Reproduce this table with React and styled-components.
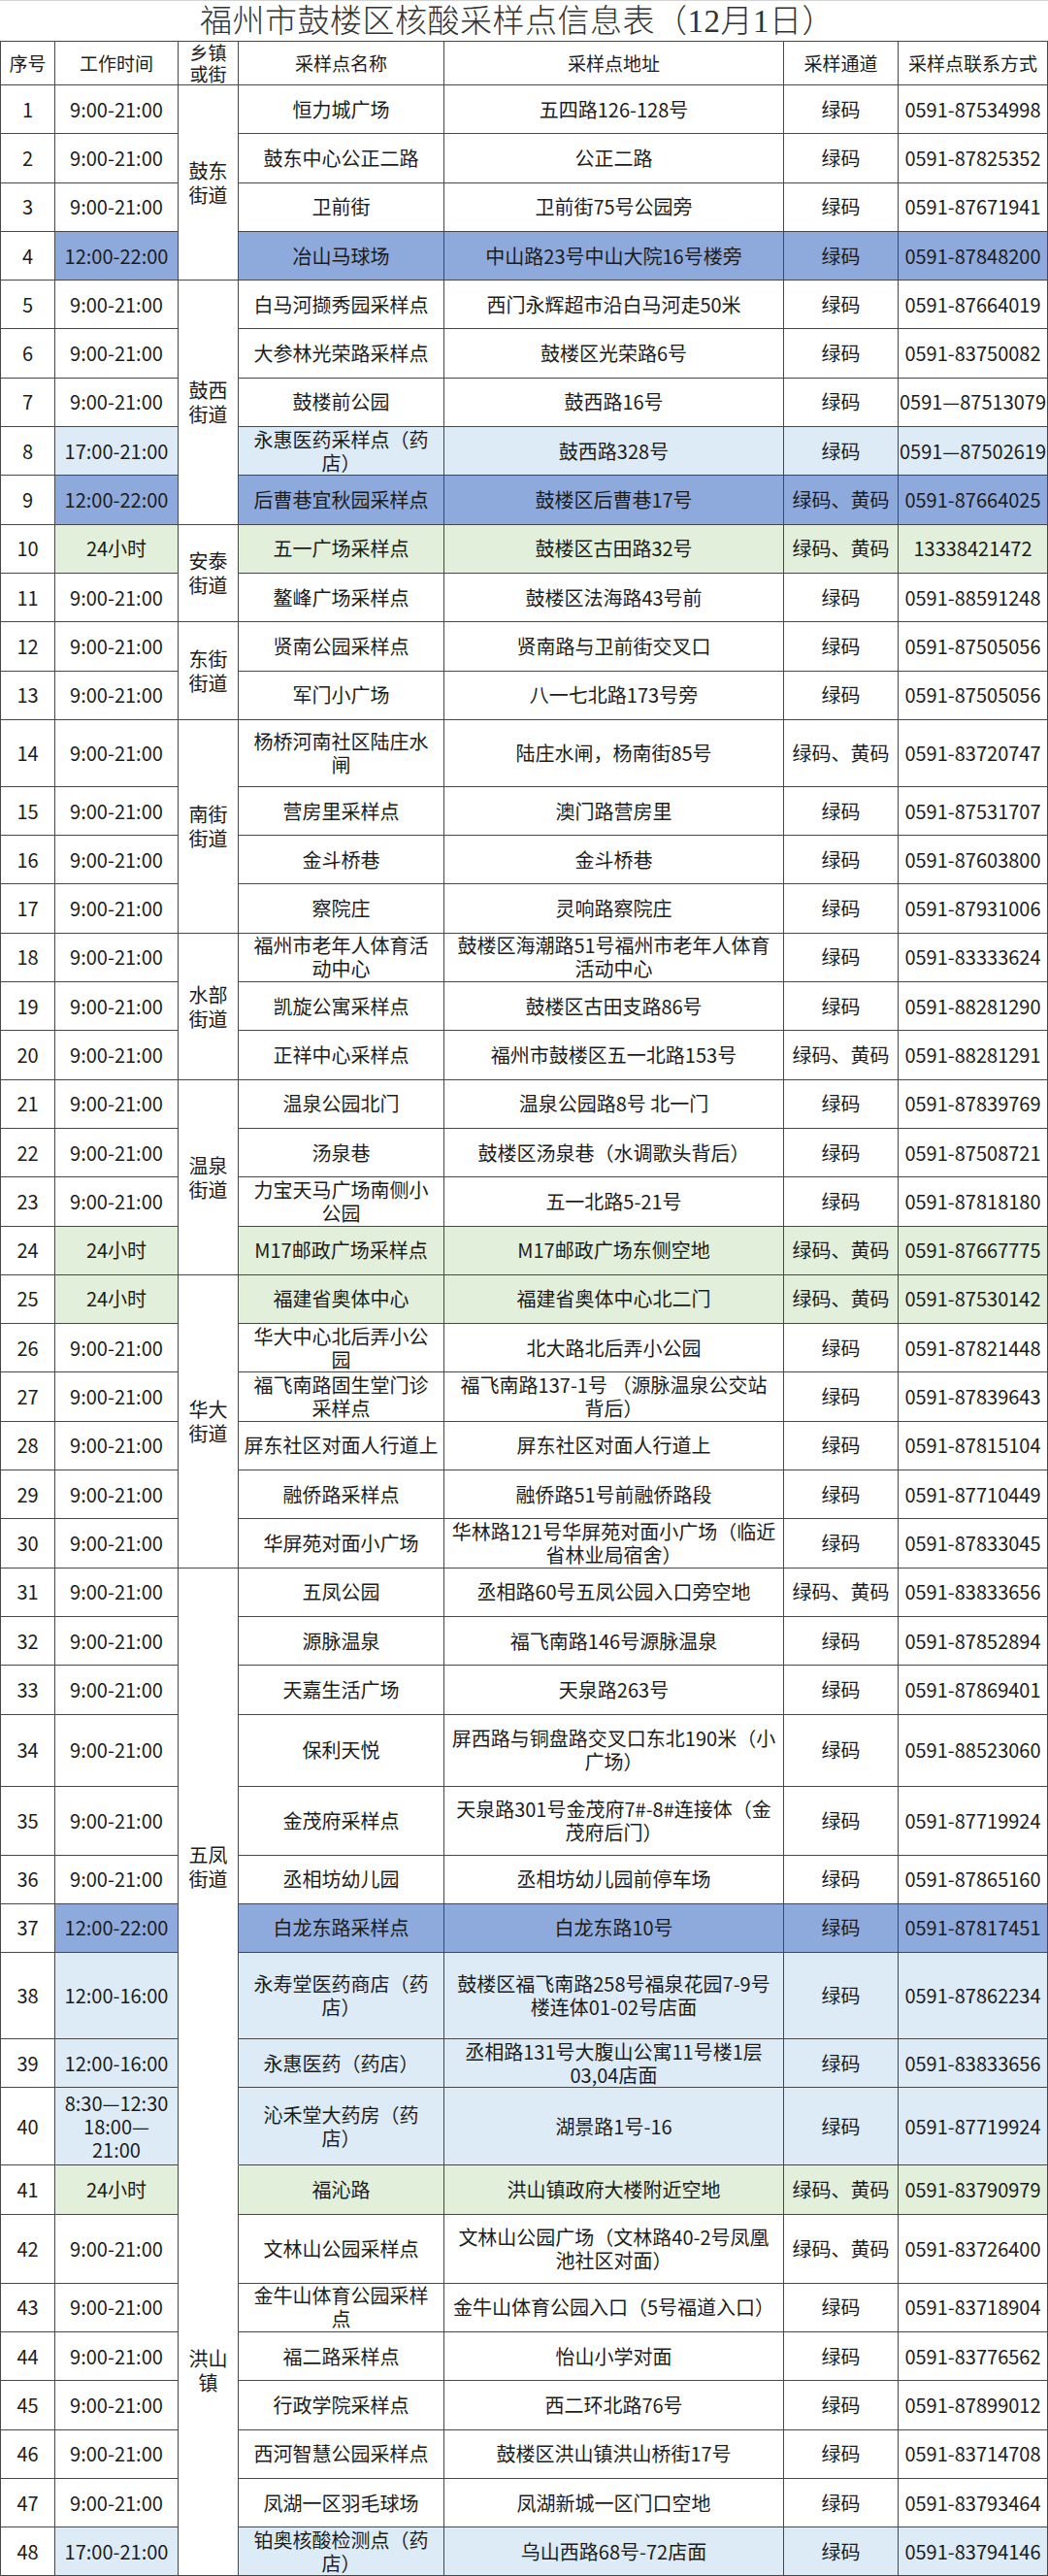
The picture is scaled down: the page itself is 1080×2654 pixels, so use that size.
import React from 'react';
import styled, { createGlobalStyle } from 'styled-components';

const GlobalStyle = createGlobalStyle`
  html, body {
    margin: 0;
    padding: 0;
    background: #ffffff;
  }
  body {
    font-family: "Noto Sans CJK SC", "Noto Sans", sans-serif;
    color: #1c1c1c;
  }
`;

const COLORS = {
  B: '#8ea9db',
  L: '#ddebf7',
  G: '#e2efda',
};

const LINE = '#474747';

const Sheet = styled.div`
  width: 1080px;
  display: grid;
  grid-template-columns: 57px 127px 62px 212px 350px 118px 154px;
  grid-template-rows: ${(p) => p.$rows};
  box-sizing: border-box;
`;

const Title = styled.div`
  grid-column: 1 / -1;
  display: flex;
  align-items: center;
  justify-content: center;
  border-top: 1px solid #d4d4d4;
  border-bottom: 1px solid ${LINE};
  box-sizing: border-box;
  font-family: "Liberation Serif", "Noto Sans CJK SC", serif;
  font-size: 33px;
  line-height: 40px;
  font-weight: 300;
  color: #333333;
  letter-spacing: 0.5px;
  padding-right: 14px;
`;

const Cell = styled.div`
  display: flex;
  align-items: center;
  justify-content: center;
  text-align: center;
  white-space: pre;
  box-sizing: border-box;
  border-right: 1px solid ${LINE};
  border-bottom: 1px solid ${(p) => (p.$noBottom ? 'transparent' : LINE)};
  border-left: ${(p) => (p.$first ? `1px solid ${LINE}` : 'none')};
  background: ${(p) => (p.$bg ? COLORS[p.$bg] : '#ffffff')};
  font-size: ${(p) => (p.$head ? '19px' : '20px')};
  line-height: 24px;
`;

const GroupCell = styled(Cell)`
  grid-row: span ${(p) => p.$span};
  background: #ffffff;
  line-height: 25px;
`;

const HeadCell = styled(Cell)`
  line-height: 22px;
`;

const groups = [
  { name: '鼓东\n街道', span: 4 },
  { name: '鼓西\n街道', span: 5 },
  { name: '安泰\n街道', span: 2 },
  { name: '东街\n街道', span: 2 },
  { name: '南街\n街道', span: 4 },
  { name: '水部\n街道', span: 3 },
  { name: '温泉\n街道', span: 4 },
  { name: '华大\n街道', span: 6 },
  { name: '五凤\n街道', span: 10, open: true },
  { name: '洪山\n镇', span: 8 },
];

const T = '9:00-21:00';
const G = '绿码';
const GY = '绿码、黄码';

// [工作时间, 名称, 地址, 通道, 电话, 底色, 行高]
const rows = [
  [T, '恒力城广场', '五四路126-128号', G, '0591-87534998'],
  [T, '鼓东中心公正二路', '公正二路', G, '0591-87825352'],
  [T, '卫前街', '卫前街75号公园旁', G, '0591-87671941'],
  ['12:00-22:00', '冶山马球场', '中山路23号中山大院16号楼旁', G, '0591-87848200', 'B'],
  [T, '白马河撷秀园采样点', '西门永辉超市沿白马河走50米', G, '0591-87664019'],
  [T, '大参林光荣路采样点', '鼓楼区光荣路6号', G, '0591-83750082'],
  [T, '鼓楼前公园', '鼓西路16号', G, '0591—87513079'],
  ['17:00-21:00', '永惠医药采样点（药\n店）', '鼓西路328号', G, '0591—87502619', 'L'],
  ['12:00-22:00', '后曹巷宜秋园采样点', '鼓楼区后曹巷17号', GY, '0591-87664025', 'B'],
  ['24小时', '五一广场采样点', '鼓楼区古田路32号', GY, '13338421472', 'G'],
  [T, '鳌峰广场采样点', '鼓楼区法海路43号前', G, '0591-88591248'],
  [T, '贤南公园采样点', '贤南路与卫前街交叉口', G, '0591-87505056'],
  [T, '军门小广场', '八一七北路173号旁', G, '0591-87505056'],
  [T, '杨桥河南社区陆庄水\n闸', '陆庄水闸，杨南街85号', GY, '0591-83720747', null, 69],
  [T, '营房里采样点', '澳门路营房里', G, '0591-87531707'],
  [T, '金斗桥巷', '金斗桥巷', G, '0591-87603800'],
  [T, '察院庄', '灵响路察院庄', G, '0591-87931006'],
  [T, '福州市老年人体育活\n动中心', '鼓楼区海潮路51号福州市老年人体育\n活动中心', G, '0591-83333624'],
  [T, '凯旋公寓采样点', '鼓楼区古田支路86号', G, '0591-88281290'],
  [T, '正祥中心采样点', '福州市鼓楼区五一北路153号', GY, '0591-88281291'],
  [T, '温泉公园北门', '温泉公园路8号 北一门', G, '0591-87839769'],
  [T, '汤泉巷', '鼓楼区汤泉巷（水调歌头背后）', G, '0591-87508721'],
  [T, '力宝天马广场南侧小\n公园', '五一北路5-21号', G, '0591-87818180'],
  ['24小时', 'M17邮政广场采样点', 'M17邮政广场东侧空地', GY, '0591-87667775', 'G'],
  ['24小时', '福建省奥体中心', '福建省奥体中心北二门', GY, '0591-87530142', 'G'],
  [T, '华大中心北后弄小公\n园', '北大路北后弄小公园', G, '0591-87821448'],
  [T, '福飞南路固生堂门诊\n采样点', '福飞南路137-1号 （源脉温泉公交站\n背后）', G, '0591-87839643'],
  [T, '屏东社区对面人行道上', '屏东社区对面人行道上', G, '0591-87815104'],
  [T, '融侨路采样点', '融侨路51号前融侨路段', G, '0591-87710449'],
  [T, '华屏苑对面小广场', '华林路121号华屏苑对面小广场（临近\n省林业局宿舍）', G, '0591-87833045'],
  [T, '五凤公园', '丞相路60号五凤公园入口旁空地', GY, '0591-83833656'],
  [T, '源脉温泉', '福飞南路146号源脉温泉', G, '0591-87852894'],
  [T, '天嘉生活广场', '天泉路263号', G, '0591-87869401'],
  [T, '保利天悦', '屏西路与铜盘路交叉口东北190米（小\n广场）', G, '0591-88523060', null, 74],
  [T, '金茂府采样点', '天泉路301号金茂府7#-8#连接体（金\n茂府后门）', G, '0591-87719924', null, 71],
  [T, '丞相坊幼儿园', '丞相坊幼儿园前停车场', G, '0591-87865160'],
  ['12:00-22:00', '白龙东路采样点', '白龙东路10号', G, '0591-87817451', 'B'],
  ['12:00-16:00', '永寿堂医药商店（药\n店）', '鼓楼区福飞南路258号福泉花园7-9号\n楼连体01-02号店面', G, '0591-87862234', 'L', 89],
  ['12:00-16:00', '永惠医药（药店）', '丞相路131号大腹山公寓11号楼1层\n03,04店面', G, '0591-83833656', 'L'],
  ['8:30—12:30\n18:00—\n21:00', '沁禾堂大药房（药\n店）', '湖景路1号-16', G, '0591-87719924', 'L', 80],
  ['24小时', '福沁路', '洪山镇政府大楼附近空地', GY, '0591-83790979', 'G'],
  [T, '文林山公园采样点', '文林山公园广场（文林路40-2号凤凰\n池社区对面）', GY, '0591-83726400', null, 71],
  [T, '金牛山体育公园采样\n点', '金牛山体育公园入口（5号福道入口）', G, '0591-83718904'],
  [T, '福二路采样点', '怡山小学对面', G, '0591-83776562'],
  [T, '行政学院采样点', '西二环北路76号', G, '0591-87899012'],
  [T, '西河智慧公园采样点', '鼓楼区洪山镇洪山桥街17号', G, '0591-83714708'],
  [T, '凤湖一区羽毛球场', '凤湖新城一区门口空地', G, '0591-83793464'],
  ['17:00-21:00', '铂奥核酸检测点（药\n店）', '乌山西路68号-72店面', G, '0591-83794146', 'L'],
];

// which row starts each township group
const groupStarts = {};
let cursor = 0;
groups.forEach((g) => {
  groupStarts[cursor] = g;
  cursor += g.span;
});

const rowTemplate = ['43px', '45px', ...rows.map((r) => `${r[6] || 50.3}px`)].join(' ');

function App() {
  return (
    <>
      <GlobalStyle />
      <Sheet $rows={rowTemplate}>
        <Title>福州市鼓楼区核酸采样点信息表（12月1日）</Title>

        <HeadCell $head $first>序号</HeadCell>
        <HeadCell $head>工作时间</HeadCell>
        <HeadCell $head>{'乡镇\n或街'}</HeadCell>
        <HeadCell $head>采样点名称</HeadCell>
        <HeadCell $head>采样点地址</HeadCell>
        <HeadCell $head>采样通道</HeadCell>
        <HeadCell $head>采样点联系方式</HeadCell>

        {rows.map((r, i) => {
          const [time, name, addr, channel, phone, bg] = r;
          const group = groupStarts[i];
          return (
            <React.Fragment key={i}>
              <Cell $first>{i + 1}</Cell>
              <Cell $bg={bg}>{time}</Cell>
              {group && (
                <GroupCell $span={group.span} $noBottom={group.open}>
                  {group.name}
                </GroupCell>
              )}
              <Cell $bg={bg}>{name}</Cell>
              <Cell $bg={bg}>{addr}</Cell>
              <Cell $bg={bg}>{channel}</Cell>
              <Cell $bg={bg}>{phone}</Cell>
            </React.Fragment>
          );
        })}
      </Sheet>
    </>
  );
}

export default App;
